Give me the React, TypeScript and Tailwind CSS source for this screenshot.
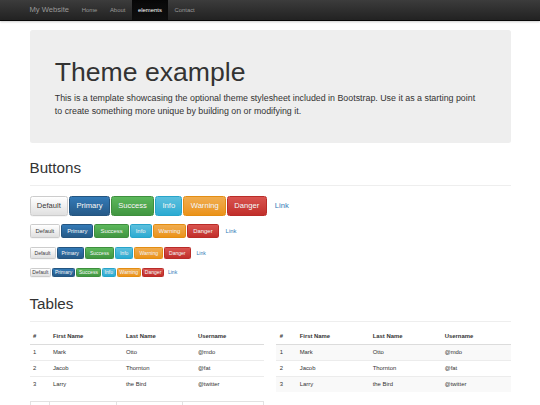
const navLinks = ['Home', 'About', 'elements', 'Contact'];

const variants: Record<string, string> = {
  Default: 'bg-linear-to-b from-white to-[#e0e0e0] border-[#ccc] text-[#333] [text-shadow:0_0.4px_0_#fff] shadow-[inset_0_0.4px_0_rgba(255,255,255,0.15),0_0.4px_0.4px_rgba(0,0,0,0.075)]',
  Primary: 'bg-linear-to-b from-[#337ab7] to-[#265a88] border-[#245580] text-white [text-shadow:0_-0.4px_0_rgba(0,0,0,0.2)]',
  Success: 'bg-linear-to-b from-[#5cb85c] to-[#419641] border-[#3e8f3e] text-white [text-shadow:0_-0.4px_0_rgba(0,0,0,0.2)]',
  Info: 'bg-linear-to-b from-[#5bc0de] to-[#2aabd2] border-[#28a4c9] text-white [text-shadow:0_-0.4px_0_rgba(0,0,0,0.2)]',
  Warning: 'bg-linear-to-b from-[#f0ad4e] to-[#eb9316] border-[#e38d13] text-white [text-shadow:0_-0.4px_0_rgba(0,0,0,0.2)]',
  Danger: 'bg-linear-to-b from-[#d9534f] to-[#c12e2a] border-[#b92c28] text-white [text-shadow:0_-0.4px_0_rgba(0,0,0,0.2)]',
  Link: 'border-transparent text-[#337ab7]',
};

// widths tuned a little tighter: tiny text gets rounded glyph advances
const sizes: Record<string, string> = {
  lg: 'px-[6.3px] py-[4px] text-[7.6px] leading-[10px] rounded-[2.5px]',
  md: 'px-[5px] py-[2px] text-[5.9px] leading-[8px] rounded-[1.7px]',
  sm: 'px-[4px] py-[1.5px] text-[5.06px] leading-[7px] rounded-[1.3px]',
  xs: 'px-[1.8px] py-0 text-[5.06px] leading-[7px] rounded-[1.3px]',
};

const buttonRows = [
  { size: 'lg', mt: 'mt-[10.3px]' },
  { size: 'md', mt: 'mt-[8px]' },
  { size: 'sm', mt: 'mt-[9px]' },
  { size: 'xs', mt: 'mt-[9px]' },
];

const people = [
  ['1', 'Mark', 'Otto', '@mdo'],
  ['2', 'Jacob', 'Thornton', '@fat'],
  ['3', 'Larry', 'the Bird', '@twitter'],
];

const headers = ['#', 'First Name', 'Last Name', 'Username'];

const PageHeader = ({ title, mt }: { title: string; mt: string }) => (
  <div className={`${mt} pb-[3.8px] border-b border-[#eee]`}>
    <h1 className="text-[15.2px] leading-[1.1] mb-[4.2px] text-[#333]">{title}</h1>
  </div>
);

const PlainTable = ({ striped }: { striped?: boolean }) => (
  <table className="w-full table-fixed border-collapse text-[5.9px] leading-[8.4px] text-[#333] mb-[8.4px]">
    <colgroup>
      <col className="w-[20px]" />
      <col className="w-[73px]" />
      <col className="w-[72px]" />
      <col />
    </colgroup>
    <thead>
      <tr className="border-b border-[#dcdcdc]">
        {headers.map(h => (
          <th key={h} className="h-[15px] px-[3.4px] text-left font-bold align-middle">{h}</th>
        ))}
      </tr>
    </thead>
    <tbody>
      {people.map((row, i) => (
        <tr key={row[0]} className={`border-t border-[#ececec] ${striped && i % 2 === 0 ? 'bg-[#f9f9f9]' : ''}`}>
          {row.map((c, j) => (
            <td key={j} className="h-[16px] px-[3.4px] align-middle">{c}</td>
          ))}
        </tr>
      ))}
    </tbody>
  </table>
);

const BorderedTable = () => (
  <table className="w-full table-fixed border-collapse border border-[#e2e2e2] text-[5.9px] leading-[8.4px] text-[#333]">
    <colgroup>
      <col className="w-[19px]" />
      <col className="w-[67.4px]" />
      <col className="w-[66px]" />
      <col />
    </colgroup>
    <thead>
      <tr>
        {headers.map(h => (
          <th key={h} className="h-[16px] px-[3.4px] pt-[4px] text-left align-top font-bold border border-[#e2e2e2]">{h}</th>
        ))}
      </tr>
    </thead>
  </table>
);

const CondensedTable = () => (
  <table className="w-full table-fixed border-collapse text-[5.9px] leading-[8.4px] text-[#333]">
    <colgroup>
      <col className="w-[16.6px]" />
      <col className="w-[73px]" />
      <col className="w-[74px]" />
      <col />
    </colgroup>
    <thead>
      <tr>
        {headers.map(h => (
          <th key={h} className="px-[2.1px] py-[2.1px] text-left font-bold">{h}</th>
        ))}
      </tr>
    </thead>
  </table>
);

const App = () => {
  return (
    <div className="h-[405px] overflow-hidden bg-white font-['Liberation_Sans',Arial,sans-serif] text-[#333]">
      <nav className="h-[21px] bg-linear-to-b from-[#3c3c3c] to-[#222] border-b border-[#080808] shadow-[0_0.5px_2px_rgba(0,0,0,0.2)]">
        <div className="w-[481px] mx-auto flex h-full">
          <div className="flex items-center pr-[6.3px] text-[7.6px] text-[#9d9d9d] [text-shadow:0_-0.4px_0_rgba(0,0,0,0.25)]">
            My Website
          </div>
          {navLinks.map(link => (
            <div
              key={link}
              className={`flex items-center px-[6.3px] text-[5.9px] [text-shadow:0_-0.4px_0_rgba(0,0,0,0.25)] ${
                link === 'elements'
                  ? 'text-white bg-linear-to-b from-[#080808] to-[#0f0f0f] shadow-[inset_0_1px_2px_rgba(0,0,0,0.25)]'
                  : 'text-[#9d9d9d]'
              }`}
            >
              {link}
            </div>
          ))}
        </div>
      </nav>

      <div className="w-[481px] mx-auto pt-[8.5px]">
        <div className="rounded-[2.5px] bg-[#eee] px-[25.3px] pt-[20.25px] pb-[19px]">
          <h1 className="mt-[8.4px] mb-[4.2px] text-[26.6px] leading-[1.1] text-[#333]">Theme example</h1>
          <p className="mb-[6.3px] text-[8.86px] leading-[1.5] text-[#333]">
            This is a template showcasing the optional theme stylesheet included in Bootstrap. Use it as a starting point
            <br />
            to create something more unique by building on or modifying it.
          </p>
        </div>

        <PageHeader title="Buttons" mt="mt-[16.7px]" />
        {buttonRows.map(row => (
          <div key={row.size} className={`${row.mt} flex items-start gap-[1px]`}>
            {Object.keys(variants).map(name => (
              <button key={name} className={`border ${sizes[row.size]} ${variants[name]}`}>
                {name}
              </button>
            ))}
          </div>
        ))}

        <PageHeader title="Tables" mt="mt-[19.3px]" />
        <div className="mt-[7px] grid grid-cols-2 gap-x-[12.6px]">
          <div>
            <PlainTable />
            <BorderedTable />
          </div>
          <div>
            <PlainTable striped />
            <CondensedTable />
          </div>
        </div>
      </div>
    </div>
  );
};

export default App;
